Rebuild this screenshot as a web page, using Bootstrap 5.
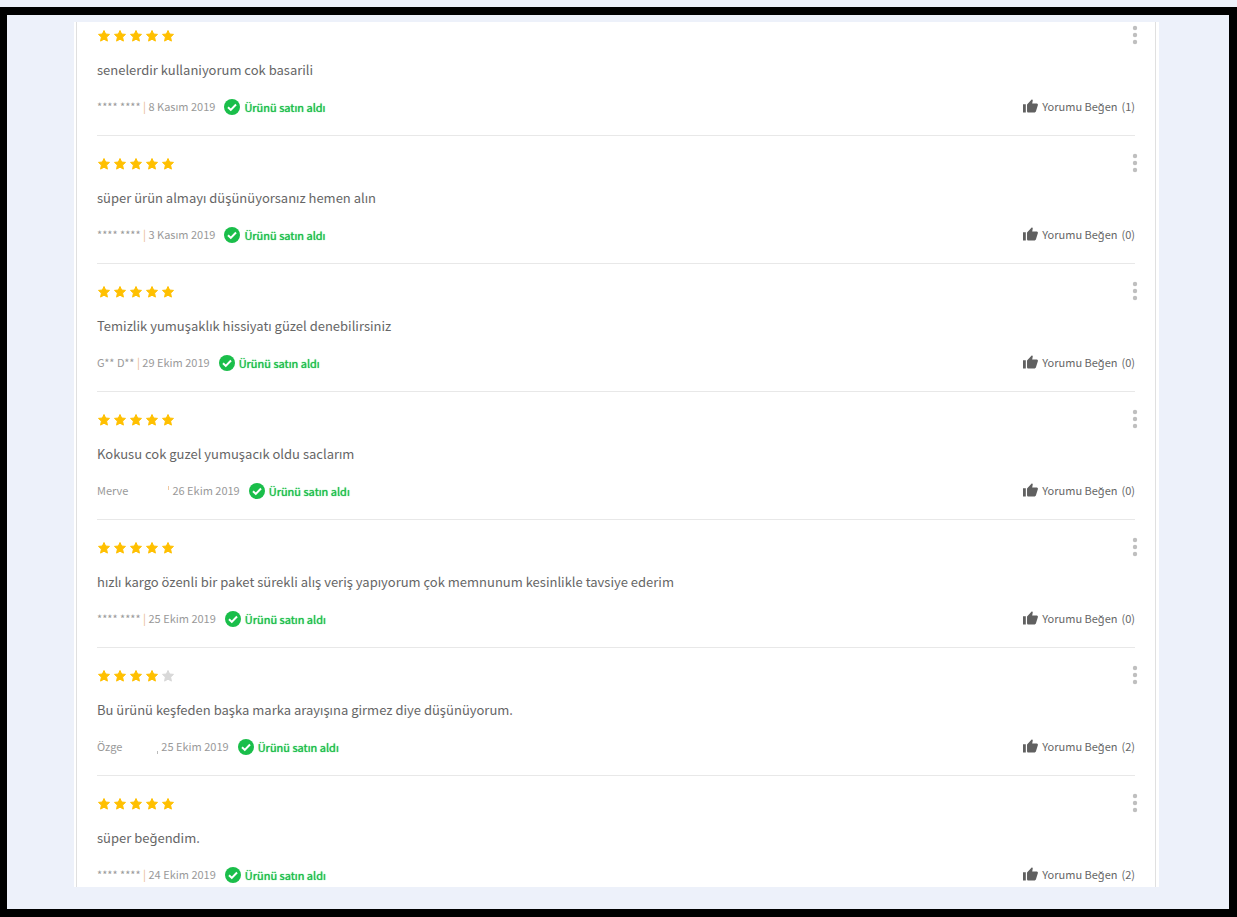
<!DOCTYPE html>
<html lang="tr">
<head>
<meta charset="utf-8">
<meta name="viewport" content="width=device-width, initial-scale=1">
<title>Ürün yorumları</title>
<link href="https://cdn.jsdelivr.net/npm/bootstrap@5.3.0/dist/css/bootstrap.min.css" rel="stylesheet">
<style>
  body { background: #edf1fa; font-family: "Noto Sans CJK JP", "Noto Sans", sans-serif; font-size: 13px; line-height: 20px; color: #666; padding-top: 7px; min-height: 100vh; }
  .frame { flex: 1; border: 8px solid #000; border-left-width: 7px; padding: 7px 70px 22px 67px; }
  .panel { background: #fff; padding: 0 3px 0 2px; }
  .reviews { border: solid #e0e0e0; border-width: 0 1px; padding: 0 20px; }
  .review { padding: 20px 0 19px; border-bottom: 1px solid #e8e8e8; }
  .review:first-child { padding-top: 6px; }
  .review:last-child { padding-bottom: 3px; border-bottom: 0; }
  .top-line { height: 16px; }
  .stars { fill: #ffc000; stroke: #ffc000; stroke-linejoin: round; padding-left: 1px; gap: 4px; }
  .stars svg { width: 12px; height: 12px; overflow: visible; }
  .stars .off { fill: #d8d8d8; stroke: #d8d8d8; }
  .comment { margin: 16px 0; }
  .meta { font-size: 11px; height: 20px; }
  .author { color: #999; white-space: pre; }
  .sep { color: #e8b888; }
  .hidden-name { display: inline-block; width: 40px; }
  .hidden-name.short { width: 35px; }
  .tick { display: inline-block; width: 1px; height: 4px; margin-right: 3px; background: #f0c8a0; vertical-align: 5px; }
  .tick.low { background: #bbb; height: 3px; vertical-align: -3px; }
  .bought { color: #1abe4a; text-shadow: 0 0 1px #1abe4a; margin-left: 9px; gap: 4px; padding-top: 2px; line-height: 18px; }
  .plain { background: none; border: 0; padding: 0; color: inherit; }
  .more { width: 20px; height: 20px; margin: -2px -10px 0 0; fill: #bfbfbf; }
</style>
</head>
<body class="d-flex flex-column">
<svg class="d-none" aria-hidden="true">
  <symbol id="star" viewBox="0 0 12 12" overflow="visible"><path d="M6 .5l1.600 3.500 3.900.4-2.900 2.700.8 4L6 9.200l-3.400 1.900.8-4L.5 4.400 4.400 4z"/></symbol>
  <symbol id="check" viewBox="0 0 16 16"><circle cx="8" cy="8" r="8" fill="#1abe4a"/><path d="M4 8.200l2.800 2.700 5.200-5.400" fill="none" stroke="#fff" stroke-width="2"/></symbol>
  <symbol id="thumb" viewBox="0 0 16 14"><path d="M0 5h3v9H0zM4.300 5.300 9 .3c.6-.5 1.500.2 1.400.9L9.800 4.300h4.600c1 0 1.700.8 1.500 1.700l-2 6.400c-.3 1-1 1.600-2 1.600H5.800c-.9 0-1.500-.6-1.500-1.500z"/></symbol>
  <symbol id="dots" viewBox="0 0 20 20"><circle cx="10" cy="3" r="2.200"/><circle cx="10" cy="10" r="2.200"/><circle cx="10" cy="17" r="2.200"/></symbol>
</svg>
<main class="frame">
  <div class="panel">
    <div class="reviews">
      <article class="review">
        <div class="top-line d-flex justify-content-between align-items-center">
          <div class="stars d-flex" role="img" aria-label="5 / 5"><svg><use href="#star"/></svg><svg><use href="#star"/></svg><svg><use href="#star"/></svg><svg><use href="#star"/></svg><svg><use href="#star"/></svg></div>
          <button class="plain more d-flex" aria-label="Seçenekler"><svg width="20" height="20"><use href="#dots"/></svg></button>
        </div>
        <p class="comment">senelerdir kullaniyorum cok basarili</p>
        <div class="meta d-flex align-items-center">
          <span class="author">**** **** <span class="sep">|</span> 8 Kasım 2019</span>
          <span class="bought d-flex align-items-center"><svg width="16" height="16"><use href="#check"/></svg>Ürünü satın aldı</span>
          <button class="plain d-flex align-items-center gap-1 ms-auto"><svg width="15" height="14" fill="#606060"><use href="#thumb"/></svg>Yorumu Beğen <span>(1)</span></button>
        </div>
      </article>
      <article class="review">
        <div class="top-line d-flex justify-content-between align-items-center">
          <div class="stars d-flex" role="img" aria-label="5 / 5"><svg><use href="#star"/></svg><svg><use href="#star"/></svg><svg><use href="#star"/></svg><svg><use href="#star"/></svg><svg><use href="#star"/></svg></div>
          <button class="plain more d-flex" aria-label="Seçenekler"><svg width="20" height="20"><use href="#dots"/></svg></button>
        </div>
        <p class="comment">süper ürün almayı düşünüyorsanız hemen alın</p>
        <div class="meta d-flex align-items-center">
          <span class="author">**** **** <span class="sep">|</span> 3 Kasım 2019</span>
          <span class="bought d-flex align-items-center"><svg width="16" height="16"><use href="#check"/></svg>Ürünü satın aldı</span>
          <button class="plain d-flex align-items-center gap-1 ms-auto"><svg width="15" height="14" fill="#606060"><use href="#thumb"/></svg>Yorumu Beğen <span>(0)</span></button>
        </div>
      </article>
      <article class="review">
        <div class="top-line d-flex justify-content-between align-items-center">
          <div class="stars d-flex" role="img" aria-label="5 / 5"><svg><use href="#star"/></svg><svg><use href="#star"/></svg><svg><use href="#star"/></svg><svg><use href="#star"/></svg><svg><use href="#star"/></svg></div>
          <button class="plain more d-flex" aria-label="Seçenekler"><svg width="20" height="20"><use href="#dots"/></svg></button>
        </div>
        <p class="comment">Temizlik yumuşaklık hissiyatı güzel denebilirsiniz</p>
        <div class="meta d-flex align-items-center">
          <span class="author">G** D** <span class="sep">|</span> 29 Ekim 2019</span>
          <span class="bought d-flex align-items-center"><svg width="16" height="16"><use href="#check"/></svg>Ürünü satın aldı</span>
          <button class="plain d-flex align-items-center gap-1 ms-auto"><svg width="15" height="14" fill="#606060"><use href="#thumb"/></svg>Yorumu Beğen <span>(0)</span></button>
        </div>
      </article>
      <article class="review">
        <div class="top-line d-flex justify-content-between align-items-center">
          <div class="stars d-flex" role="img" aria-label="5 / 5"><svg><use href="#star"/></svg><svg><use href="#star"/></svg><svg><use href="#star"/></svg><svg><use href="#star"/></svg><svg><use href="#star"/></svg></div>
          <button class="plain more d-flex" aria-label="Seçenekler"><svg width="20" height="20"><use href="#dots"/></svg></button>
        </div>
        <p class="comment">Kokusu cok guzel yumuşacık oldu saclarım</p>
        <div class="meta d-flex align-items-center">
          <span class="author">Merve<span class="hidden-name"></span><span class="tick"></span>26 Ekim 2019</span>
          <span class="bought d-flex align-items-center"><svg width="16" height="16"><use href="#check"/></svg>Ürünü satın aldı</span>
          <button class="plain d-flex align-items-center gap-1 ms-auto"><svg width="15" height="14" fill="#606060"><use href="#thumb"/></svg>Yorumu Beğen <span>(0)</span></button>
        </div>
      </article>
      <article class="review">
        <div class="top-line d-flex justify-content-between align-items-center">
          <div class="stars d-flex" role="img" aria-label="5 / 5"><svg><use href="#star"/></svg><svg><use href="#star"/></svg><svg><use href="#star"/></svg><svg><use href="#star"/></svg><svg><use href="#star"/></svg></div>
          <button class="plain more d-flex" aria-label="Seçenekler"><svg width="20" height="20"><use href="#dots"/></svg></button>
        </div>
        <p class="comment">hızlı kargo özenli bir paket sürekli alış veriş yapıyorum çok memnunum kesinlikle tavsiye ederim</p>
        <div class="meta d-flex align-items-center">
          <span class="author">**** **** <span class="sep">|</span> 25 Ekim 2019</span>
          <span class="bought d-flex align-items-center"><svg width="16" height="16"><use href="#check"/></svg>Ürünü satın aldı</span>
          <button class="plain d-flex align-items-center gap-1 ms-auto"><svg width="15" height="14" fill="#606060"><use href="#thumb"/></svg>Yorumu Beğen <span>(0)</span></button>
        </div>
      </article>
      <article class="review">
        <div class="top-line d-flex justify-content-between align-items-center">
          <div class="stars d-flex" role="img" aria-label="4 / 5"><svg><use href="#star"/></svg><svg><use href="#star"/></svg><svg><use href="#star"/></svg><svg><use href="#star"/></svg><svg class="off"><use href="#star"/></svg></div>
          <button class="plain more d-flex" aria-label="Seçenekler"><svg width="20" height="20"><use href="#dots"/></svg></button>
        </div>
        <p class="comment">Bu ürünü keşfeden başka marka arayışına girmez diye düşünüyorum.</p>
        <div class="meta d-flex align-items-center">
          <span class="author">Özge<span class="hidden-name short"></span><span class="tick low"></span>25 Ekim 2019</span>
          <span class="bought d-flex align-items-center"><svg width="16" height="16"><use href="#check"/></svg>Ürünü satın aldı</span>
          <button class="plain d-flex align-items-center gap-1 ms-auto"><svg width="15" height="14" fill="#606060"><use href="#thumb"/></svg>Yorumu Beğen <span>(2)</span></button>
        </div>
      </article>
      <article class="review">
        <div class="top-line d-flex justify-content-between align-items-center">
          <div class="stars d-flex" role="img" aria-label="5 / 5"><svg><use href="#star"/></svg><svg><use href="#star"/></svg><svg><use href="#star"/></svg><svg><use href="#star"/></svg><svg><use href="#star"/></svg></div>
          <button class="plain more d-flex" aria-label="Seçenekler"><svg width="20" height="20"><use href="#dots"/></svg></button>
        </div>
        <p class="comment">süper beğendim.</p>
        <div class="meta d-flex align-items-center">
          <span class="author">**** **** <span class="sep">|</span> 24 Ekim 2019</span>
          <span class="bought d-flex align-items-center"><svg width="16" height="16"><use href="#check"/></svg>Ürünü satın aldı</span>
          <button class="plain d-flex align-items-center gap-1 ms-auto"><svg width="15" height="14" fill="#606060"><use href="#thumb"/></svg>Yorumu Beğen <span>(2)</span></button>
        </div>
      </article>
    </div>
  </div>
</main>
<script src="https://cdn.jsdelivr.net/npm/bootstrap@5.3.0/dist/js/bootstrap.bundle.min.js"></script>
</body>
</html>
